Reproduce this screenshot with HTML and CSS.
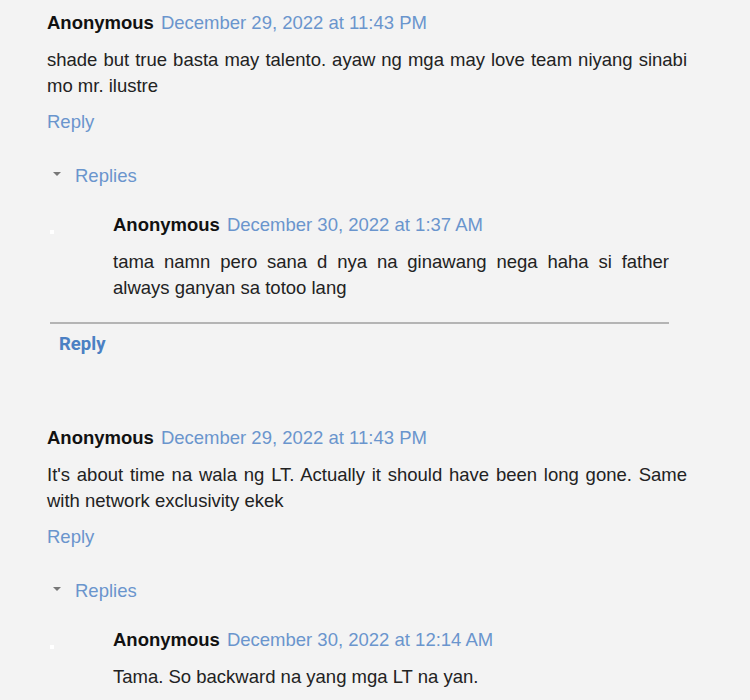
FILE: index.html
```html
<!DOCTYPE html>
<html lang="tl">
<head>
    <meta charset="UTF-8">
    <meta name="viewport" content="width=device-width, initial-scale=1.0">
    <title>Comments</title>
    <link rel="stylesheet" href="styles.css">
</head>
<body>

    <div class="comments">

        <div class="comment">
            <div class="comment-header">
                <span class="author">Anonymous</span>
                <a href="#" class="date">December 29, 2022 at 11:43 PM</a>
            </div>
            <p class="comment-body">shade but true basta may talento. ayaw ng mga may love team niyang sinabi mo mr. ilustre</p>
            <a href="#" class="reply-link">Reply</a>

            <div class="replies-toggle">
                <span class="arrow"></span>
                <a href="#">Replies</a>
            </div>
            <div class="thread">
                <div class="reply">
                    <div class="avatar"><span class="dot"></span></div>
                    <div class="reply-content">
                        <div class="comment-header">
                            <span class="author">Anonymous</span>
                            <a href="#" class="date">December 30, 2022 at 1:37 AM</a>
                        </div>
                        <p class="comment-body">tama namn pero sana d nya na ginawang nega haha si father always ganyan sa totoo lang</p>
                    </div>
                </div>
                <div class="thread-footer">
                    <a href="#" class="thread-reply">Reply</a>
                </div>
            </div>
        </div>

        <div class="comment">
            <div class="comment-header">
                <span class="author">Anonymous</span>
                <a href="#" class="date">December 29, 2022 at 11:43 PM</a>
            </div>
            <p class="comment-body">It's about time na wala ng LT. Actually it should have been long gone. Same with network exclusivity ekek</p>
            <a href="#" class="reply-link">Reply</a>

            <div class="replies-toggle">
                <span class="arrow"></span>
                <a href="#">Replies</a>
            </div>
            <div class="thread">
                <div class="reply">
                    <div class="avatar"><span class="dot"></span></div>
                    <div class="reply-content">
                        <div class="comment-header">
                            <span class="author">Anonymous</span>
                            <a href="#" class="date">December 30, 2022 at 12:14 AM</a>
                        </div>
                        <p class="comment-body">Tama. So backward na yang mga LT na yan.</p>
                    </div>
                </div>
            </div>
        </div>

    </div>

</body>
</html>
```
FILE: styles.css
```css
body {
    margin: 0;
    background-color: #f3f3f3;
    font-family: "Liberation Sans", Arial, sans-serif;
    font-size: 18.5px;
    line-height: 26px;
    color: #222;
}
a {
    text-decoration: none;
}
.comments {
    padding: 10px 0 0 47px;
    width: 640px;
}
.comment {
    margin-bottom: 68px;
}
.comment-header {
    display: flex;
    gap: 7px;
}
.author {
    font-weight: bold;
    color: #111;
}
.date {
    color: #6a95cd;
}
.comment-body {
    margin: 11px 0 0;
    text-align: justify;
}
.reply-link {
    display: inline-block;
    margin-top: 10px;
    color: #6a95cd;
}
.replies-toggle {
    display: flex;
    align-items: center;
    margin-top: 28px;
    padding-left: 6px;
}
.replies-toggle .arrow {
    width: 0;
    height: 0;
    border-left: 4px solid transparent;
    border-right: 4px solid transparent;
    border-top: 4px solid #777;
    margin-right: 14px;
    margin-top: -4px;
}
.replies-toggle a {
    color: #6a95cd;
}
.thread {
    margin-left: 3px;
    width: 619px;
    margin-top: 23px;
}
.reply {
    display: flex;
}
.avatar {
    width: 63px;
    flex-shrink: 0;
}
.avatar .dot {
    display: block;
    width: 4px;
    height: 4px;
    background: #fff;
    margin: 18px 0 0 0;
}
.reply-content {
    flex: 1;
}
.thread-footer {
    margin-top: 21px;
    border-top: 2px solid #b4b4b4;
    padding: 7px 0 0 9px;
}
.thread-reply {
    font-family: Roboto, "Liberation Sans", sans-serif;
    font-weight: bold;
    color: #4b80c3;
}
```
